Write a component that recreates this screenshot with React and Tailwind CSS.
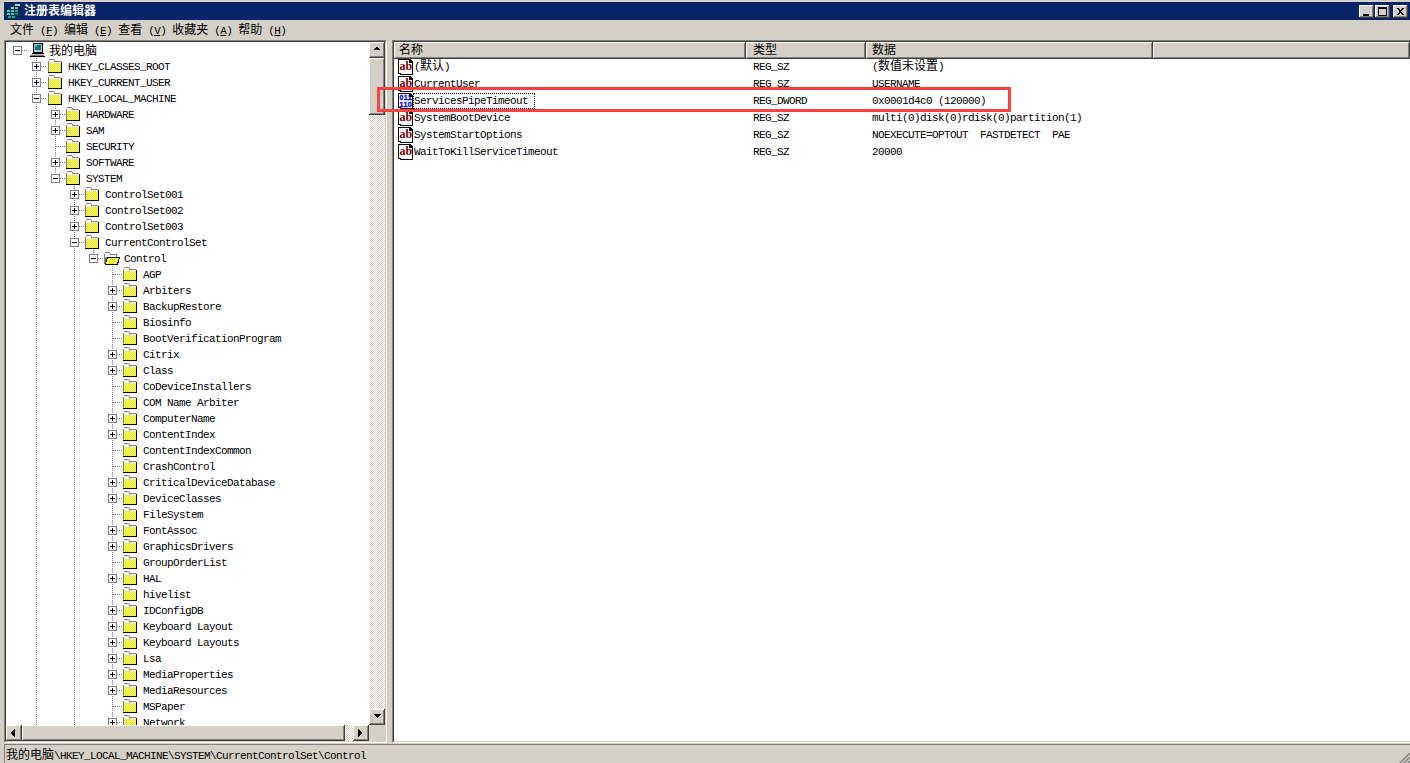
import React from 'react';

const raised = 'bg-[#d4d0c8] shadow-[inset_-1px_-1px_#404040,inset_1px_1px_#ffffff,inset_-2px_-2px_#808080]';
const dither = 'bg-[repeating-conic-gradient(#ffffff_0_25%,#d4d0c8_0_50%)] bg-[length:2px_2px]';

const Cn = ({ children }) => <span className="text-[12px] tracking-normal">{children}</span>;

// every other pixel of a box, for the dithered folder fill
function checker(x0, y0, x1, y1) {
  let d = '';
  for (let y = y0; y < y1; y++) {
    for (let x = x0; x < x1; x++) {
      if ((x + y) % 2 === 0) d += `M${x} ${y}h1v1h-1z`;
    }
  }
  return d;
}
const folderDots = checker(2, 5, 14, 14);
const openDots = checker(6, 8, 14, 14);

function FolderIcon() {
  return (
    <svg width="16" height="16" viewBox="0 0 16 16" shapeRendering="crispEdges" className="shrink-0">
      <path d="M1 15V3h1V1h5v1h1v1h6v12z" fill="#808080" />
      <rect x="2" y="2" width="5" height="2" fill="#ffffff" />
      <rect x="2" y="4" width="12" height="1" fill="#ffffff" />
      <rect x="2" y="5" width="12" height="9" fill="#ffff40" />
      <path d={folderDots} fill="#e0e060" />
      <rect x="14" y="4" width="1" height="11" fill="#000000" />
      <rect x="1" y="14" width="14" height="1" fill="#000000" />
    </svg>
  );
}

function OpenFolderIcon() {
  return (
    <svg width="17" height="16" viewBox="0 0 17 16" shapeRendering="crispEdges" className="shrink-0">
      <path d="M1 14V4h1V2h5v1h1v1h6v3h-1v7z" fill="#808080" />
      <rect x="2" y="3" width="5" height="2" fill="#ffffff" />
      <rect x="2" y="5" width="11" height="2" fill="#ffffff" />
      <path d="M2 15l2-8h13l-2 8z" fill="#000000" />
      <path d="M3 14l2-6h11l-2 6z" fill="#ffff40" />
      <path d={openDots} fill="#e0e060" />
    </svg>
  );
}

function ComputerIcon() {
  return (
    <svg width="16" height="16" viewBox="0 0 16 16" shapeRendering="crispEdges" className="shrink-0">
      <rect x="4" y="1" width="10" height="10" fill="#000000" />
      <rect x="5" y="2" width="8" height="8" fill="#c0c0c0" />
      <rect x="6" y="3" width="6" height="5" fill="#008080" />
      <rect x="6" y="3" width="2" height="2" fill="#00c0c0" />
      <rect x="3" y="11" width="12" height="1" fill="#000000" />
      <rect x="2" y="12" width="13" height="2" fill="#c0c0c0" />
      <rect x="1" y="13" width="14" height="1" fill="#808080" />
      <rect x="1" y="14" width="15" height="1" fill="#000000" />
    </svg>
  );
}

function RegIcon() {
  return (
    <svg width="17" height="16" viewBox="0 0 17 16" shapeRendering="crispEdges" className="shrink-0">
      <path d="M0 6h4V3h4V0h9v4h-2v8l-3 4H2l-2-3z" fill="#00304a" />
      <rect x="2" y="7" width="3" height="2" fill="#30d0c0" />
      <rect x="6" y="7" width="3" height="2" fill="#30d0c0" />
      <rect x="10" y="7" width="3" height="2" fill="#20a0a0" />
      <rect x="2" y="10" width="3" height="2" fill="#30d0c0" />
      <rect x="6" y="10" width="3" height="2" fill="#30d0c0" />
      <rect x="10" y="10" width="3" height="2" fill="#108080" />
      <rect x="3" y="13" width="3" height="2" fill="#20a0a0" />
      <rect x="7" y="13" width="3" height="2" fill="#20a0a0" />
      <rect x="6" y="4" width="3" height="2" fill="#70e8d8" />
      <rect x="10" y="1" width="5" height="2" fill="#c8c8c8" />
      <rect x="10" y="4" width="3" height="2" fill="#80a8b0" />
    </svg>
  );
}

function ValueIcon({ dword }) {
  return (
    <svg width="16" height="16" viewBox="0 0 16 16" shapeRendering="crispEdges" className="shrink-0">
      <path d="M0 0h12l3 3v13H2v-1H0z" fill="#000000" />
      <path d="M1 1h10v3h3v11H3v-1H1z" fill="#ffffff" />
      {dword ? (
        <g fill="#0000ff" stroke="#0000ff" strokeWidth="0.300" fontFamily="Liberation Sans" fontWeight="700" fontSize="7" letterSpacing="0.400">
          <text x="1.500" y="7">011</text>
          <text x="1.500" y="14">110</text>
        </g>
      ) : (
        <text x="1.500" y="11" fill="#800000" fontFamily="Liberation Serif" fontWeight="700" fontSize="12" letterSpacing="0">ab</text>
      )}
    </svg>
  );
}

function Connector({ state, line, root }) {
  return (
    <svg width="19" height="16" viewBox="0 0 19 16" shapeRendering="crispEdges" className="shrink-0">
      {!root && line === 'full' && <path d="M9.5 0V16" stroke="#808080" strokeDasharray="1 1" />}
      {!root && line === 'half' && <path d="M9.5 0V8" stroke="#808080" strokeDasharray="1 1" />}
      <path d="M10 8.5H19" stroke="#808080" strokeDasharray="1 1" />
      {state && (
        <>
          <rect x="5.5" y="4.5" width="8" height="8" fill="#ffffff" stroke="#808080" />
          <path d="M7 8.5h5" stroke="#000000" />
          {state === '+' && <path d="M9.5 6v5" stroke="#000000" />}
        </>
      )}
    </svg>
  );
}

function GuideCell({ on }) {
  return (
    <svg width="19" height="16" viewBox="0 0 19 16" shapeRendering="crispEdges" className="shrink-0">
      {on && <path d="M9.5 0V16" stroke="#808080" strokeDasharray="1 1" />}
    </svg>
  );
}

const controlChildren = [
  ['AGP', ''], ['Arbiters', '+'], ['BackupRestore', '+'], ['Biosinfo', ''], ['BootVerificationProgram', ''],
  ['Citrix', '+'], ['Class', '+'], ['CoDeviceInstallers', ''], ['COM Name Arbiter', ''], ['ComputerName', '+'],
  ['ContentIndex', '+'], ['ContentIndexCommon', ''], ['CrashControl', ''], ['CriticalDeviceDatabase', '+'],
  ['DeviceClasses', '+'], ['FileSystem', ''], ['FontAssoc', '+'], ['GraphicsDrivers', '+'], ['GroupOrderList', ''],
  ['HAL', '+'], ['hivelist', ''], ['IDConfigDB', '+'], ['Keyboard Layout', '+'], ['Keyboard Layouts', '+'],
  ['Lsa', '+'], ['MediaProperties', '+'], ['MediaResources', '+'], ['MSPaper', ''], ['Network', '+'],
];

const treeRows = [
  { depth: 1, label: 'HKEY_CLASSES_ROOT', state: '+', guides: [] },
  { depth: 1, label: 'HKEY_CURRENT_USER', state: '+', guides: [] },
  { depth: 1, label: 'HKEY_LOCAL_MACHINE', state: '-', guides: [] },
  { depth: 2, label: 'HARDWARE', state: '+', guides: [1] },
  { depth: 2, label: 'SAM', state: '+', guides: [1] },
  { depth: 2, label: 'SECURITY', state: '', guides: [1] },
  { depth: 2, label: 'SOFTWARE', state: '+', guides: [1] },
  { depth: 2, label: 'SYSTEM', state: '-', guides: [1], line: 'half' },
  { depth: 3, label: 'ControlSet001', state: '+', guides: [1] },
  { depth: 3, label: 'ControlSet002', state: '+', guides: [1] },
  { depth: 3, label: 'ControlSet003', state: '+', guides: [1] },
  { depth: 3, label: 'CurrentControlSet', state: '-', guides: [1] },
  { depth: 4, label: 'Control', state: '-', guides: [1, 3], line: 'half', open: true },
  ...controlChildren.map(([label, state]) => ({ depth: 5, label, state, guides: [1, 3] })),
];

function TreeRow({ row }) {
  const cells = [];
  for (let i = 0; i < row.depth; i++) cells.push(<GuideCell key={i} on={row.guides.includes(i)} />);
  return (
    <div className="flex items-center h-4 shrink-0 whitespace-pre">
      {cells}
      <Connector state={row.state} line={row.line || 'full'} />
      <span className={row.depth >= 2 ? '' : 'ml-px'}>{row.open ? <OpenFolderIcon /> : <FolderIcon />}</span>
      <span className={`pt-px ${row.open ? 'ml-1' : 'ml-[5px]'}`}>{row.label}</span>
    </div>
  );
}

function Arrow({ dir }) {
  const d = { up: 'M4 1h1v1h1v1h1v1H1V3h1V2h1V1z', down: 'M1 1h7v1H7v1H6v1H5v1H4V4H3V3H2V2H1z', left: 'M4 0h1v8H4V7H3V6H2V5H1V3h1V2h1V1h1z', right: 'M1 0h1v1h1v1h1v1h1v2H4v1H3v1H2v1H1z' }[dir];
  return (
    <svg width="9" height="8" viewBox="0 0 9 8" shapeRendering="crispEdges">
      <path d={d} fill="#000000" />
    </svg>
  );
}

function ScrollButton({ dir, className }) {
  return (
    <div className={`${raised} flex items-center justify-center shrink-0 ${className}`}>
      <Arrow dir={dir} />
    </div>
  );
}

function WinButton({ children, className }) {
  return (
    <div className={`${raised} w-[15px] h-[13px] flex items-center justify-center ${className || ''}`}>
      <svg width="11" height="9" viewBox="0 0 11 9" shapeRendering="crispEdges">{children}</svg>
    </div>
  );
}

const values = [
  { name: <><span>(</span><Cn>默认</Cn><span>)</span></>, type: 'REG_SZ', data: <><span>(</span><Cn>数值未设置</Cn><span>)</span></> },
  { name: 'CurrentUser', type: 'REG_SZ', data: 'USERNAME' },
  { name: 'ServicesPipeTimeout', type: 'REG_DWORD', data: '0x0001d4c0 (120000)', dword: true, focus: true },
  { name: 'SystemBootDevice', type: 'REG_SZ', data: 'multi(0)disk(0)rdisk(0)partition(1)' },
  { name: 'SystemStartOptions', type: 'REG_SZ', data: 'NOEXECUTE=OPTOUT  FASTDETECT  PAE' },
  { name: 'WaitToKillServiceTimeout', type: 'REG_SZ', data: '20000' },
];

const menus = [['文件', 'F'], ['编辑', 'E'], ['查看', 'V'], ['收藏夹', 'A'], ['帮助', 'H']];

export default function App() {
  return (
    <div className="relative w-[1410px] h-[763px] overflow-hidden bg-[#d4d0c8] flex flex-col text-black text-[11px] tracking-[-0.6px] leading-4 font-['Liberation_Mono','Noto_Sans_CJK_SC',monospace]">
      {/* Title bar */}
      <div className="ml-1 mt-[2px] h-[18px] shrink-0 bg-[#0a246a] flex items-center">
        <span className="ml-px"><RegIcon /></span>
        <span className="ml-[2px] pt-px text-white font-bold text-[12px] tracking-normal">注册表编辑器</span>
        <div className="ml-auto mr-[2px] flex items-center">
          <WinButton>
            <rect x="2" y="7" width="6" height="2" fill="#000000" />
          </WinButton>
          <WinButton className="ml-px">
            <path d="M1 0h9v9H1zM2 2v6h7V2z" fill="#000000" fillRule="evenodd" />
          </WinButton>
          <WinButton className="ml-[3px]">
            <path d="M2 1h2l1.500 2 1.500-2h2L6.500 4.500 9 8H7L5.500 6 4 8H2l2.500-3.500z" fill="#000000" />
          </WinButton>
        </div>
      </div>

      {/* Menu bar */}
      <div className="h-5 shrink-0 flex items-center pl-[7px] pt-[2px]">
        {menus.map(([label, key]) => (
          <span key={key} className="px-[3px] whitespace-pre">
            <Cn>{label}</Cn> (<span className="underline">{key}</span>)
          </span>
        ))}
      </div>

      {/* Panes */}
      <div className="flex-1 min-h-0 flex pl-1 gap-[5px]">
        <div className="w-[383px] shrink-0 border border-t-[#808080] border-l-[#808080] border-r-white border-b-white">
          <div className="h-full border border-t-[#404040] border-l-[#404040] border-r-[#d4d0c8] border-b-[#d4d0c8] flex flex-col">
            <div className="flex-1 min-h-0 flex">
              <div className="flex-1 min-w-0 bg-white overflow-hidden pl-[2px] flex flex-col">
                <div className="flex items-center h-4 shrink-0">
                  <Connector state="-" root />
                  <span className="ml-[2px]"><ComputerIcon /></span>
                  <span className="ml-1 pt-[3px]"><Cn>我的电脑</Cn></span>
                </div>
                {treeRows.map((row) => (
                  <TreeRow key={row.label} row={row} />
                ))}
              </div>
              <div className="w-4 shrink-0 flex flex-col">
                <ScrollButton dir="up" className="h-4" />
                <div className={`${raised} h-[57px] shrink-0`} />
                <div className={`flex-1 ${dither}`} />
                <ScrollButton dir="down" className="h-4" />
              </div>
            </div>
            <div className="h-4 shrink-0 flex">
              <ScrollButton dir="left" className="w-4" />
              <div className={`${raised} w-[323px] shrink-0`} />
              <div className={`flex-1 ${dither}`} />
              <ScrollButton dir="right" className="w-4" />
              <div className="w-4 shrink-0" />
            </div>
          </div>
        </div>

        <div className="flex-1 min-w-0 border-t border-l border-b border-t-[#808080] border-l-[#808080] border-b-white">
          <div className="h-full border-t border-l border-b border-t-[#404040] border-l-[#404040] border-b-[#d4d0c8] bg-white flex flex-col">
            <div className="h-4 shrink-0 grid grid-cols-[352px_120px_287px_1fr]">
              <div className={`${raised} pl-[5px] pt-px`}><Cn>名称</Cn></div>
              <div className={`${raised} pl-[7px] pt-px`}><Cn>类型</Cn></div>
              <div className={`${raised} pl-[6px] pt-px`}><Cn>数据</Cn></div>
              <div className={raised} />
            </div>
            {values.map((v) => (
              <div key={v.type + v.data} className="h-[17px] shrink-0 grid grid-cols-[352px_120px_287px_1fr] items-center whitespace-pre">
                <div className="flex items-center pl-1">
                  <ValueIcon dword={v.dword} />
                  {v.focus ? (
                    <span className="-ml-px w-[122px] h-4 border border-dotted border-black leading-[14px]">{v.name}</span>
                  ) : (
                    <span>{v.name}</span>
                  )}
                </div>
                <div className="pl-[7px]">{v.type}</div>
                <div className="pl-[6px]">{v.data}</div>
                <div />
              </div>
            ))}
          </div>
        </div>
      </div>

      {/* Status bar */}
      <div className="h-[19px] shrink-0 mt-px ml-1 border-t border-l border-t-[#808080] border-l-[#808080] flex items-center pl-px pt-[3px] relative">
        <Cn>我的电脑</Cn>
        <span>\HKEY_LOCAL_MACHINE\SYSTEM\CurrentControlSet\Control</span>
        <svg width="11" height="11" viewBox="0 0 11 11" className="absolute right-0 bottom-0">
          <path d="M11 1L1 11M11 5L5 11M11 9L9 11" stroke="#808080" strokeWidth="1.500" />
        </svg>
      </div>

      {/* Red annotation around the value */}
      <div className="absolute left-[377px] top-[87px] w-[634px] h-[25px] border-[3px] border-[#ff4040]" />
    </div>
  );
}
